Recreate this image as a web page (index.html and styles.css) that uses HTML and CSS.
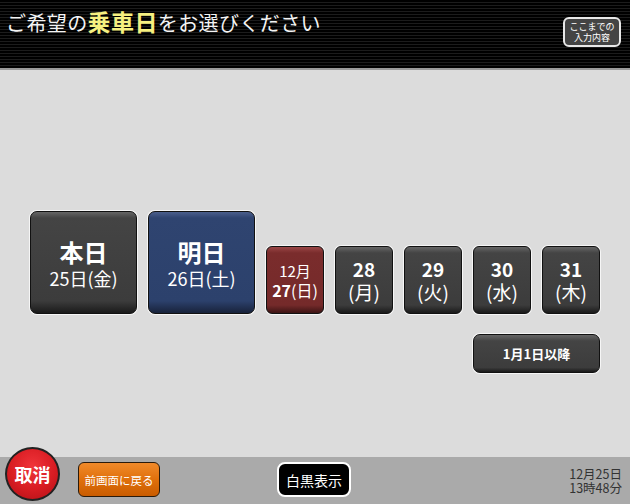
FILE: index.html
```html
<!DOCTYPE html>
<html lang="ja">
<head>
  <meta charset="UTF-8">
  <title>乗車日の選択</title>
  <link rel="stylesheet" href="styles.css">
</head>
<body>

<div class="screen">
  <div class="header">
    <h1 class="title">ご希望の<span class="em">乗車日</span>をお選びください</h1>
    <button class="summary">ここまでの<br>入力内容</button>
  </div>

  <div class="main">
    <div class="days">
      <button class="btn big">
        <span class="big-label">本日</span>
        <span class="big-date">25日(金)</span>
      </button>
      <button class="btn big blue">
        <span class="big-label">明日</span>
        <span class="big-date">26日(土)</span>
      </button>
      <button class="btn small red">
        <span class="month">12月</span>
        <span class="red-day"><b>27</b>(日)</span>
      </button>
      <button class="btn small">
        <span class="num">28</span>
        <span class="wd">(月)</span>
      </button>
      <button class="btn small">
        <span class="num">29</span>
        <span class="wd">(火)</span>
      </button>
      <button class="btn small">
        <span class="num">30</span>
        <span class="wd">(水)</span>
      </button>
      <button class="btn small">
        <span class="num">31</span>
        <span class="wd">(木)</span>
      </button>
    </div>
    <div class="more-row">
      <button class="btn more">1月1日以降</button>
    </div>
  </div>

  <div class="footer">
    <button class="cancel">取消</button>
    <button class="back">前画面に戻る</button>
    <button class="mono">白黒表示</button>
    <div class="clock">12月25日<br>13時48分</div>
  </div>
</div>

</body>
</html>
```

FILE: styles.css
```css
* { box-sizing: border-box; }
body { margin: 0; font-family: "Noto Sans CJK JP", "Noto Sans", sans-serif; background: #dcdcdc; }
button { font-family: inherit; cursor: pointer; padding: 0; }
.screen { width: 630px; height: 504px; display: flex; flex-direction: column; overflow: hidden; }

.header { height: 70px; flex: none; display: flex; justify-content: space-between; align-items: flex-start;
  background: repeating-linear-gradient(#000 0, #000 2px, #1c1c1c 2px, #1c1c1c 3px);
  border-bottom: 2px solid #9a9a9a; padding: 0 9px 0 6px; }
.title { margin: 6px 0 0; font-size: 20px; font-weight: normal; color: #f4f4f4; letter-spacing: 0.4px; line-height: 30px; }
.title .em { font-size: 23px; font-weight: bold; color: #f6f080; }
.summary { margin-top: 17px; width: 58px; height: 30px; border: 2px solid #e8e8e8; border-radius: 6px;
  background: #444; color: #fff; font-size: 9px; line-height: 11px; }

.main { flex: 1; padding: 141px 30px 0; }
.days { display: flex; align-items: flex-end; gap: 11px; }
.btn { color: #fff; border: 1px solid #111; border-radius: 7px; box-shadow: 0 0 0 1px #f6f6f6;
  background: linear-gradient(#666 0, #444 6px, #3c3c3c 88%, #1a1a1a 100%);
  display: flex; flex-direction: column; align-items: center; justify-content: center; }
.big { width: 107px; height: 103px; }
.big.blue { background: linear-gradient(#4b5f8c 0, #2f4470 6px, #2c416c 88%, #18223a 100%); }
.big-label { font-size: 24px; font-weight: bold; line-height: 28px; margin-top: 2px; }
.big-date { font-size: 18px; line-height: 24px; }
.small { width: 58px; height: 68px; border-radius: 6px; }
.small.red { background: linear-gradient(#9a4646 0, #7a2c2c 6px, #752a2a 88%, #3c1414 100%); }
.month { font-size: 15px; line-height: 18px; margin-top: 2px; }
.red-day { font-size: 16px; line-height: 20px; }
.num { font-size: 19px; font-weight: bold; line-height: 22px; margin-top: 1px; }
.wd { font-size: 19px; line-height: 24px; }
.more-row { display: flex; justify-content: flex-end; margin-top: 20px; }
.more { width: 127px; height: 39px; font-size: 13px; font-weight: bold; }

.footer { height: 47px; flex: none; background: #aaa; display: flex; align-items: flex-start; padding: 0 8px 0 5px; }
.cancel { width: 55px; height: 54px; margin-top: -10px; border-radius: 50%; border: 2px solid #222;
  background: radial-gradient(circle at 50% 35%, #f0343a 0, #d81c22 55%, #b01016 100%); color: #fff;
  font-size: 18px; font-weight: bold; }
.back { margin: 5px 0 0 18px; width: 82px; height: 35px; border: 1px solid #2a1a0a; border-radius: 6px;
  background: linear-gradient(#f08a2a, #e0700c 50%, #c95c00); color: #fff; font-size: 11.5px; }
.mono { margin: 5px 0 0 117px; width: 74px; height: 35px; border: 2px solid #fff; border-radius: 8px;
  background: #000; color: #fff; font-size: 14px; }
.clock { margin: 10px 0 0 auto; text-align: right; font-size: 12.5px; line-height: 13.5px; color: #333; }
```
